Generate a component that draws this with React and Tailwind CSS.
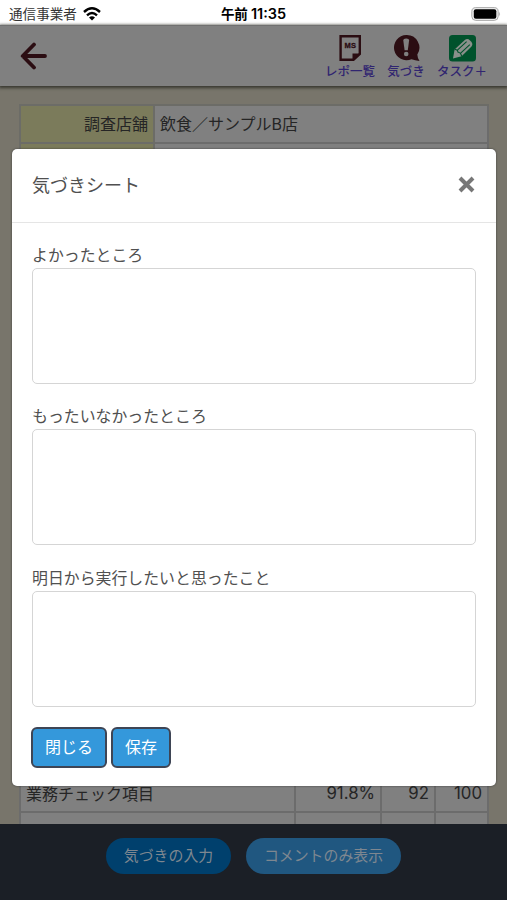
import React from 'react';

const navItems = [
  { label: 'レポ一覧', icon: 'report', width: 'w-[52px]' },
  { label: '気づき', icon: 'notice', width: 'w-[60px]' },
  { label: 'タスク＋', icon: 'task', width: 'w-[52px]' },
];

const fields = ['よかったところ', 'もったいなかったところ', '明日から実行したいと思ったこと'];

const NavIcon = ({ name }) => {
  if (name === 'report') {
    return (
      <svg className="w-[27px] h-7" viewBox="0 0 27 28">
        <path d="M3.6 2.3H22.8V20L16.5 25.8H3.6Z" fill="none" stroke="#2b0d12" strokeWidth="2.4" />
        <path d="M23 19.5H15.5V27Z" fill="#2b0d12" />
        <text
          x="13.2"
          y="14"
          textAnchor="middle"
          fontSize="7.5"
          fontWeight="bold"
          fontFamily="Liberation Sans, sans-serif"
          textLength="11.5"
          fill="#2b0d12"
          stroke="#2b0d12"
          strokeWidth=".3"
        >
          MS
        </text>
      </svg>
    );
  }
  if (name === 'notice') {
    return (
      <svg className="w-[27px] h-7" viewBox="0 0 27 28">
        <path
          d="M13.3 1A12.6 12.6 0 1 0 18.5 25.2Q22 26.5 26.5 27Q24.5 24 24.3 20.5A12.6 12.6 0 0 0 13.3 1Z"
          fill="#2b0d12"
        />
        <path d="M10.3 6.5Q10.3 4.5 13.2 4.5T16.1 6.5L14.8 16.3H11.6Z" fill="#808080" />
        <circle cx="13.2" cy="20" r="2.3" fill="#808080" />
      </svg>
    );
  }
  return (
    <svg className="w-[27px] h-7" viewBox="0 0 27 28">
      <rect x="0" y="1" width="27" height="26.5" rx="3.5" fill="#00522c" />
      <path d="M4 24.5L5.6 15.6L15.8 5.9Q18.5 3.8 21 6.4L22.3 7.8Q24.4 10.4 22.3 12.8L12.6 22.3Z" fill="#8a908b" />
      <path
        d="M5.6 15.6Q8.4 15.2 9.1 18.2Q12 18.6 12.6 22.3M8.4 16.2L17.6 7.6M11.4 19.4L20.8 10.6"
        fill="none"
        stroke="#00522c"
        strokeWidth="1.1"
      />
    </svg>
  );
};

const StatusBar = () => (
  <div className="h-[25px] shrink-0 bg-white grid grid-cols-3 items-center pl-[9px] pr-[6px] text-black">
    <div className="flex items-center gap-[6px] pt-[3px]">
      <span className="text-[13.6px] leading-5 text-[#333] whitespace-nowrap">通信事業者</span>
      <svg className="w-[18px] h-[14px]" viewBox="0 0 18 14" fill="none" stroke="#000" strokeWidth="2.4">
        <path d="M1 5Q9-2.3 17 5" />
        <path d="M4 8.3Q9 3.7 14 8.3" />
        <path d="M6 10.5Q9 7.8 12 10.5L9 13.5Z" fill="#000" stroke="none" />
      </svg>
    </div>
    <div className="pt-[3px] pr-[3px] text-center text-[13.5px] leading-5 font-semibold whitespace-nowrap">
      午前<span className="ml-[3px] text-[14.5px]">11:35</span>
    </div>
    <div className="flex items-center justify-end pt-[2px]">
      <svg className="w-[30px] h-[14px]" viewBox="0 0 30 14">
        <rect x=".8" y=".6" width="26.4" height="12.8" rx="4" fill="#eee" stroke="#aaa" />
        <rect x="2.8" y="2.3" width="22.5" height="9.4" rx="2" fill="#000" />
        <path d="M28.2 4.5Q30 7 28.2 9.5Z" fill="#aaa" />
      </svg>
    </div>
  </div>
);

const Header = () => (
  <header className="h-[61px] shrink-0 flex items-start justify-between bg-[#808080] border-t border-[#707070] pl-5 pr-[19px] shadow-[0_1px_3px_1px_#37372f]">
    <svg
      className="w-[27px] h-[28px] mt-[16px]"
      viewBox="0 0 27 28"
      fill="none"
      stroke="#2b0d12"
      strokeWidth="3.8"
      strokeLinecap="round"
      strokeLinejoin="round"
    >
      <path d="M14 2.5L2.7 14L14 25.5M3 14H25" />
    </svg>
    <nav className="flex pt-2">
      {navItems.map((item) => (
        <a key={item.label} className={`${item.width} flex flex-col items-center text-[#302570]`}>
          <NavIcon name={item.icon} />
          <span className="mt-[1px] text-[12.5px] leading-[17px] font-medium whitespace-nowrap">{item.label}</span>
        </a>
      ))}
    </nav>
  </header>
);

const Modal = () => (
  <div className="absolute left-3 top-[149px] w-[484px] h-[637px] rounded-[5px] bg-white text-[#505050] shadow-[0_0_2px_#333]">
    <div className="h-[74px] flex items-center justify-between border-b border-[#e5e5e5] px-5">
      <h2 className="text-[18px] leading-7">気づきシート</h2>
      <button className="mr-[1px] mb-[2px]" aria-label="閉じる">
        <svg className="w-[17px] h-[17px]" viewBox="0 0 17 17" stroke="#777" strokeWidth="4">
          <path d="M2 2L15 15M15 2L2 15" />
        </svg>
      </button>
    </div>
    <div className="px-5 pt-5">
      {fields.map((label) => (
        <div key={label} className="h-[161.3px]">
          <label className="block h-[25px] text-[15.9px] leading-[25px]">{label}</label>
          <textarea className="block w-full h-[116px] resize-none rounded-[5px] border border-[#d5d5d5] bg-white outline-none" />
        </div>
      ))}
      <div className="-ml-px flex gap-1 text-[16px] text-white">
        <button className="w-[76px] h-[41px] rounded-[6px] border-2 border-[#3e4555] bg-[#3498db]">閉じる</button>
        <button className="w-[60px] h-[41px] rounded-[6px] border-2 border-[#3e4555] bg-[#3498db]">保存</button>
      </div>
    </div>
  </div>
);

const App = () => {
  return (
    <div className="relative w-[507px] h-[900px] overflow-hidden flex flex-col bg-[#78756b] text-[#252525] font-['Inter','Noto_Sans_CJK_JP',sans-serif]">
      <StatusBar />
      <Header />

      <main className="flex-1 min-h-0 flex flex-col justify-between pl-[19px] pr-[18px] pt-[18px]">
        <div className="grid grid-cols-[134px_1fr] grid-rows-[38px_12px] border-t-2 border-l-2 border-[#6c6c67] text-[16px]">
          <div className="flex items-center justify-end bg-[#7b7b5b] border-r-2 border-b-2 border-[#6c6c67] pr-[5px]">
            調査店舗
          </div>
          <div className="flex items-center bg-[#808080] border-r-2 border-b-2 border-[#6c6c6c] pl-[5px]">
            飲食／サンプルB店
          </div>
          <div className="bg-[#7b7b5b] border-r-2 border-[#6c6c67]" />
          <div className="bg-[#808080] border-r-2 border-[#6c6c6c]" />
        </div>

        {/* Score rows */}
        <div className="grid grid-cols-[275px_86px_54px_1fr] grid-rows-[38px_11px] border-l-2 border-[#6c6c6c] bg-[#808080] text-[16px]">
          {['業務チェック項目', '91.8%', '92', '100'].map((cell, i) => (
            <div
              key={cell}
              className={`flex items-center border-r-2 border-b-2 border-[#6c6c6c] px-[5px] pt-[2px] ${i ? 'justify-end text-[16.8px]' : ''}`}
            >
              {cell}
            </div>
          ))}
          {[0, 1, 2, 3].map((n) => (
            <div key={n} className="border-r-2 border-[#6c6c6c]" />
          ))}
        </div>
      </main>

      <footer className="h-[76px] shrink-0 flex justify-center gap-[15px] bg-[#1b1f26] pt-[14px] text-[14.9px] text-[#7e8790]">
        <button className="w-[125px] h-[36px] rounded-full bg-[#00406d]">気づきの入力</button>
        <button className="w-[155px] h-[36px] rounded-full bg-[#205780]">コメントのみ表示</button>
      </footer>

      <Modal />
    </div>
  );
};

export default App;
